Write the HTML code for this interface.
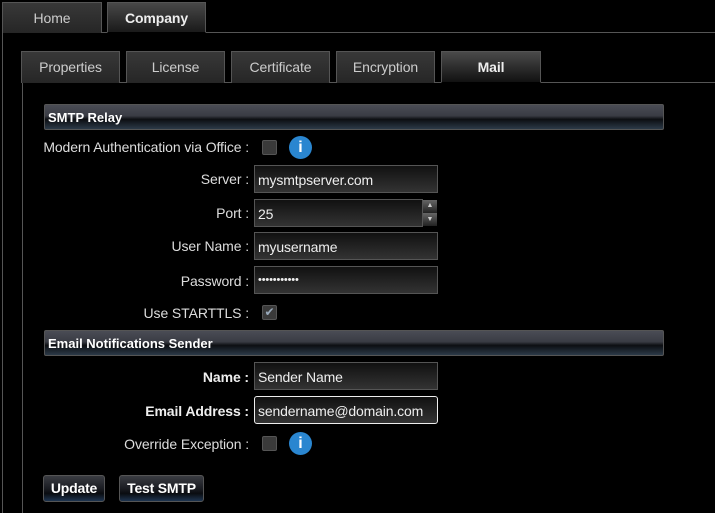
<!DOCTYPE html>
<html><head><style>
*{box-sizing:border-box;margin:0;padding:0}
body{width:715px;height:513px;background:#000;font-family:"Liberation Sans",Arial,sans-serif;font-size:14px;color:#ddd;position:relative;overflow:hidden}
.a{position:absolute}
.tab{position:absolute;background:linear-gradient(#383838,#262626);border:1px solid #555;border-bottom:none;color:#ccc;text-align:center;font-size:14px;letter-spacing:-0.1px}
.tab.act{background:linear-gradient(#484848,#1a1a1a);color:#eee;font-weight:bold}
.hdr{position:absolute;left:44px;width:620px;height:26px;border:1px solid #555;border-radius:2px;background:linear-gradient(#4a4c55 0%,#3a3c44 45%,#0c0e12 60%,#2c3a48 100%);color:#fff;font-weight:bold;font-size:13px;padding:5px 0 0 3px}
.lbl{position:absolute;right:466px;text-align:right;white-space:nowrap;color:#ddd;letter-spacing:-0.1px}
.lbl.b{font-weight:bold;color:#eee}
.inp{position:absolute;left:254px;width:184px;height:28px;border:1px solid #555;background:linear-gradient(#111,#333);color:#eee;padding:6px 0 0 3px;font-size:14px;letter-spacing:-0.15px}
.cb{position:absolute;left:262px;width:15px;height:15px;border:1px solid #555;background:#3a3a3a;border-radius:2px}
.info{position:absolute;left:289px;width:23px;height:23px;border-radius:50%;background:#2a86d0;color:#fff;font-weight:bold;font-family:"Liberation Sans",sans-serif;font-size:16px;text-align:center;line-height:23px}
.btn{position:absolute;top:475px;height:27px;border:1px solid #555;border-radius:3px;background:linear-gradient(#3a3c42 0%,#1a1c22 50%,#0a0c10 70%,#1e3450 100%);color:#fff;font-weight:bold;font-size:14px;text-align:center;line-height:25px;letter-spacing:-0.2px}
</style></head><body>
<div class="a" style="left:2px;top:32px;width:713px;height:1px;background:#555"></div>
<div class="a" style="left:2px;top:32px;width:1px;height:481px;background:#555"></div>
<div class="tab" style="left:2px;top:2px;width:100px;height:31px;line-height:30px">Home</div>
<div class="tab act" style="left:107px;top:2px;width:99px;height:31px;line-height:30px;border-bottom:1px solid #000">Company</div>
<div class="a" style="left:22px;top:82px;width:693px;height:1px;background:#555"></div>
<div class="a" style="left:22px;top:82px;width:1px;height:431px;background:#555"></div>
<div class="tab" style="left:21px;top:51px;width:99px;height:32px;line-height:30px">Properties</div>
<div class="tab" style="left:126px;top:51px;width:99px;height:32px;line-height:30px">License</div>
<div class="tab" style="left:231px;top:51px;width:99px;height:32px;line-height:30px">Certificate</div>
<div class="tab" style="left:336px;top:51px;width:99px;height:32px;line-height:30px">Encryption</div>
<div class="tab act" style="left:441px;top:51px;width:100px;height:32px;line-height:30px;background:linear-gradient(#4a4a4a,#111);border-bottom:1px solid #000">Mail</div>

<div class="hdr" style="top:104px">SMTP Relay</div>
<div class="lbl" style="top:139px">Modern Authentication via Office :</div>
<div class="cb" style="top:140px"></div><div class="info" style="top:136px">i</div>
<div class="lbl" style="top:171px">Server :</div><div class="inp" style="top:165px">mysmtpserver.com</div>
<div class="lbl" style="top:205px">Port :</div><div class="inp" style="top:199px;width:169px">25</div>
<div class="a" style="left:423px;top:200px;width:14px;height:13px;background:linear-gradient(#666,#222);color:#ccc;font-size:7px;text-align:center;line-height:12px">▲</div>
<div class="a" style="left:423px;top:213px;width:14px;height:13px;background:linear-gradient(#666,#222);color:#ccc;font-size:7px;text-align:center;line-height:13px">▼</div>
<div class="lbl" style="top:238px">User Name :</div><div class="inp" style="top:232px">myusername</div>
<div class="lbl" style="top:273px">Password :</div><div class="inp" style="top:266px;font-size:11px;padding-top:7px">•••••••••••</div>
<div class="lbl" style="top:305px">Use STARTTLS :</div>
<div class="cb" style="top:305px;color:#9ab;font-size:12px;line-height:13px;text-align:center">✔</div>

<div class="hdr" style="top:330px">Email Notifications Sender</div>
<div class="lbl b" style="top:369px">Name :</div><div class="inp" style="top:362px">Sender Name</div>
<div class="lbl b" style="top:403px">Email Address :</div><div class="inp" style="top:396px;border:1px solid #eee;border-radius:3px">sendername@domain.com</div>
<div class="lbl" style="top:436px">Override Exception :</div>
<div class="cb" style="top:436px"></div><div class="info" style="top:432px">i</div>

<div class="btn" style="left:43px;width:62px">Update</div>
<div class="btn" style="left:119px;width:85px">Test SMTP</div>
</body></html>
